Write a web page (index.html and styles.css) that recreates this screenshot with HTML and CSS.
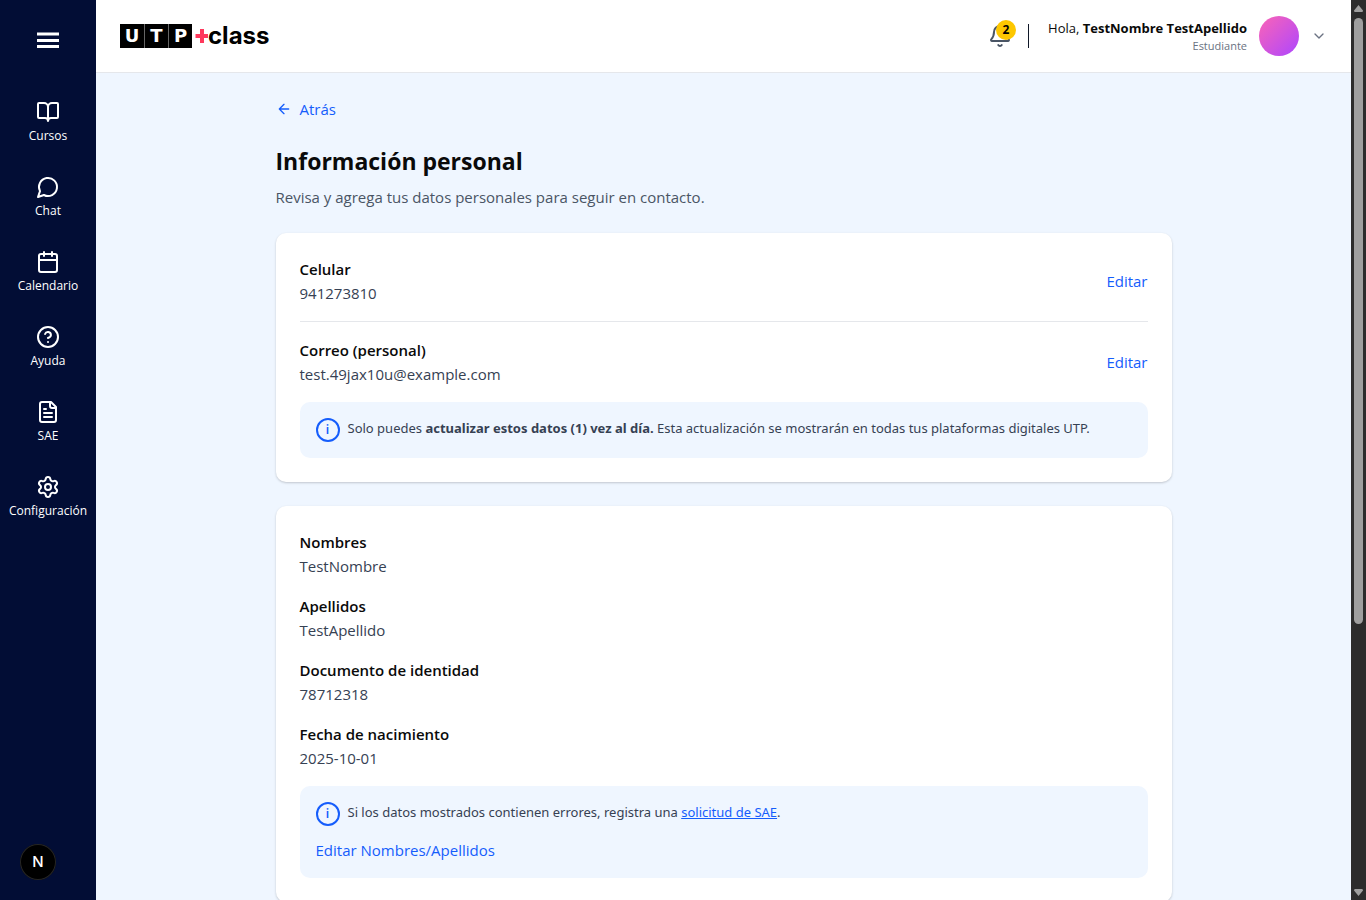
FILE: index.html
```html
<!DOCTYPE html>
<html lang="es">
<head>
<meta charset="utf-8">
<meta name="viewport" content="width=device-width, initial-scale=1">
<title>UTP+class - Información personal</title>
<link rel="stylesheet" href="styles.css">
</head>
<body class="app">
<aside class="sidebar">
  <button class="menu-button" type="button" aria-label="Menú">
    <svg class="icon" viewBox="0 0 24 24"><path class="menu-lines" d="M1 6h22M1 12.500h22M1 18.500h22"/></svg>
  </button>
  <nav class="nav">
    <a class="nav-item" href="#cursos">
      <svg class="icon" viewBox="0 0 24 24"><path d="M12 7v14M3 18a1 1 0 0 1-1-1V4a1 1 0 0 1 1-1h5a4 4 0 0 1 4 4 4 4 0 0 1 4-4h5a1 1 0 0 1 1 1v13a1 1 0 0 1-1 1h-6a3 3 0 0 0-3 3 3 3 0 0 0-3-3z"/></svg>
      <span>Cursos</span>
    </a>
    <a class="nav-item" href="#chat">
      <svg class="icon" viewBox="0 0 24 24"><path d="M7.900 20A9 9 0 1 0 4 16.100L2 22Z"/></svg>
      <span>Chat</span>
    </a>
    <a class="nav-item" href="#calendario">
      <svg class="icon" viewBox="0 0 24 24"><path d="M8 2v4M16 2v4M3 10h18"/><rect x="3" y="4" width="18" height="18" rx="2"/></svg>
      <span>Calendario</span>
    </a>
    <a class="nav-item" href="#ayuda">
      <svg class="icon" viewBox="0 0 24 24"><circle cx="12" cy="12" r="10"/><path d="M9.090 9a3 3 0 0 1 5.830 1c0 2-3 3-3 3M12 17h.01"/></svg>
      <span>Ayuda</span>
    </a>
    <a class="nav-item" href="#sae">
      <svg class="icon" viewBox="0 0 24 24"><path d="M15 2H6a2 2 0 0 0-2 2v16a2 2 0 0 0 2 2h12a2 2 0 0 0 2-2V7ZM14 2v4a2 2 0 0 0 2 2h4M10 9H8M16 13H8M16 17H8"/></svg>
      <span>SAE</span>
    </a>
    <a class="nav-item" href="#configuracion">
      <svg class="icon" viewBox="0 0 24 24"><path d="M9.671 4.136a2.340 2.340 0 0 1 4.659 0 2.340 2.340 0 0 0 3.319 1.915 2.340 2.340 0 0 1 2.330 4.033 2.340 2.340 0 0 0 0 3.831 2.340 2.340 0 0 1-2.330 4.033 2.340 2.340 0 0 0-3.319 1.915 2.340 2.340 0 0 1-4.659 0 2.340 2.340 0 0 0-3.320-1.915 2.340 2.340 0 0 1-2.330-4.033 2.340 2.340 0 0 0 0-3.831A2.340 2.340 0 0 1 6.350 6.051a2.340 2.340 0 0 0 3.319-1.915"/><circle cx="12" cy="12" r="3"/></svg>
      <span>Configuración</span>
    </a>
  </nav>
  <button class="dev-badge" type="button">N</button>
</aside>

<div class="page">
  <header class="topbar">
    <a class="logo" href="#inicio">
      <span class="logo-box">U</span><span class="logo-box">T</span><span class="logo-box">P</span>
      <svg class="logo-plus" viewBox="0 0 16 24"><path d="M10 5v14M3.500 12h12.500"/></svg>
      <span class="logo-word">class</span>
    </a>
    <div class="account">
      <button class="bell" type="button" aria-label="Notificaciones">
        <svg class="icon" viewBox="0 0 24 24"><path d="M10.268 21a2 2 0 0 0 3.464 0M3.262 15.326A1 1 0 0 0 4 17h16a1 1 0 0 0 .74-1.673C19.410 13.956 18 12.499 18 8A6 6 0 0 0 6 8c0 4.499-1.411 5.956-2.738 7.326"/></svg>
        <span class="bell-count">2</span>
      </button>
      <span class="divider"></span>
      <button class="profile" type="button">
        <span class="profile-text">
          <span class="profile-name">Hola, <strong>TestNombre TestApellido</strong></span>
          <span class="profile-role">Estudiante</span>
        </span>
        <span class="avatar"></span>
        <svg class="icon icon-small" viewBox="0 0 24 24"><path d="m6 9 6 6 6-6"/></svg>
      </button>
    </div>
  </header>

  <main class="content">
    <a class="back" href="#atras">
      <svg class="icon icon-small" viewBox="0 0 24 24"><path d="m12 19-7-7 7-7M19 12H5"/></svg>
      Atrás
    </a>
    <h1 class="title">Información personal</h1>
    <p class="subtitle">Revisa y agrega tus datos personales para seguir en contacto.</p>

    <section class="card">
      <div class="row row-lined">
        <dl class="field"><dt>Celular</dt><dd>941273810</dd></dl>
        <button class="link" type="button">Editar</button>
      </div>
      <div class="row">
        <dl class="field"><dt>Correo (personal)</dt><dd>test.49jax10u@example.com</dd></dl>
        <button class="link" type="button">Editar</button>
      </div>
      <div class="notice">
        <div class="notice-line">
          <span class="info">i</span>
          <p>Solo puedes <strong>actualizar estos datos (1) vez al día.</strong> Esta actualización se mostrarán en todas tus plataformas digitales UTP.</p>
        </div>
      </div>
    </section>

    <section class="card">
      <dl class="field"><dt>Nombres</dt><dd>TestNombre</dd></dl>
      <dl class="field"><dt>Apellidos</dt><dd>TestApellido</dd></dl>
      <dl class="field"><dt>Documento de identidad</dt><dd>78712318</dd></dl>
      <dl class="field"><dt>Fecha de nacimiento</dt><dd>2025-10-01</dd></dl>
      <div class="notice">
        <div class="notice-line">
          <span class="info">i</span>
          <p>Si los datos mostrados contienen errores, registra una <a class="inline-link" href="#solicitud">solicitud de SAE</a>.</p>
        </div>
        <button class="link" type="button">Editar Nombres/Apellidos</button>
      </div>
    </section>
  </main>
</div>

<div class="scrollbar" aria-hidden="true">
  <svg class="scroll-arrow" viewBox="0 0 9 7"><path d="M4.500 0 L9 5.500 Q9 7 8 7H1Q0 7 0 5.500Z"/></svg>
  <div class="scroll-track"><div class="scroll-thumb"></div></div>
  <svg class="scroll-arrow" viewBox="0 0 9 7"><path d="M4.500 7 L9 1.500 Q9 0 8 0H1Q0 0 0 1.500Z"/></svg>
</div>
</body>
</html>
```

FILE: styles.css
```css
* {
  box-sizing: border-box;
  margin: 0;
}

.app {
  display: grid;
  grid-template-columns: 96px minmax(0, 1fr) 15px;
  height: 100vh;
  overflow: hidden;
  background: #eff6ff;
  color: #0a0a0a;
  font-family: "Open Sans", "Noto Sans", sans-serif;
  font-size: 15px;
  line-height: 24px;
}

button {
  padding: 0;
  border: 0;
  background: none;
  color: inherit;
  font: inherit;
  cursor: pointer;
}

a {
  color: inherit;
  text-decoration: none;
}

.icon {
  display: block;
  flex: none;
  width: 24px;
  height: 24px;
  fill: none;
  stroke: currentColor;
  stroke-width: 2;
  stroke-linecap: round;
  stroke-linejoin: round;
}

.icon-small {
  width: 16px;
  height: 16px;
}

/* Sidebar */
.sidebar {
  display: flex;
  flex-direction: column;
  align-items: center;
  gap: 48px;
  padding-top: 28px;
  background: #020d35;
  color: #fff;
}

.menu-lines {
  stroke-width: 3;
  stroke-linecap: butt;
}

.nav {
  display: flex;
  flex-direction: column;
  gap: 32px;
}

.nav-item {
  display: flex;
  flex-direction: column;
  align-items: center;
  gap: 4px;
  font-size: 12px;
  line-height: 15px;
}

.dev-badge {
  position: fixed;
  left: 20px;
  bottom: 20px;
  width: 36px;
  height: 36px;
  border-radius: 50%;
  background: #000;
  box-shadow: inset 0 0 0 1px #262626;
  color: #fff;
  font-family: Inter, sans-serif;
  font-size: 15px;
  font-weight: 500;
}

/* Header */
.page {
  overflow: hidden;
}

.topbar {
  display: flex;
  align-items: center;
  justify-content: space-between;
  height: 73px;
  padding: 0 24px;
  border-bottom: 1px solid #e5e7eb;
  background: #fff;
}

.logo {
  display: flex;
  align-items: center;
  color: #000;
}

.logo-box {
  width: 24px;
  height: 24px;
  background: #000;
  color: #fff;
  font-family: "DejaVu Sans", sans-serif;
  font-size: 18px;
  font-weight: 700;
  line-height: 24px;
  text-align: center;
}

.logo-box + .logo-box {
  border-left: 1px solid #666;
}

.logo-word {
  font-family: Inter, sans-serif;
  font-size: 24px;
  font-weight: 700;
}

.logo-plus {
  width: 16px;
  height: 24px;
  fill: none;
  stroke: #ff385c;
  stroke-width: 4;
}

.account,
.profile {
  display: flex;
  align-items: center;
}

.account {
  gap: 16px;
}

.profile {
  gap: 12px;
  color: #0a0a0a;
}

.profile .icon {
  color: #6a7282;
}

.bell {
  position: relative;
  color: #4a5565;
}

.bell-count {
  position: absolute;
  top: -4px;
  right: -4px;
  width: 20px;
  height: 20px;
  border-radius: 50%;
  background: #fdc700;
  color: #000;
  font-size: 12px;
  font-weight: 700;
  line-height: 20px;
}

.divider {
  width: 1px;
  height: 24px;
  background: #101828;
}

.profile-text {
  display: flex;
  flex-direction: column;
  min-width: 202px;
  text-align: right;
}

.profile-name {
  font-size: 13px;
  line-height: 20px;
}

.profile-role {
  color: #6a7282;
  font-size: 11px;
  line-height: 16px;
}

.avatar {
  width: 40px;
  height: 40px;
  border-radius: 50%;
  background: linear-gradient(135deg, #fb64b6, #ad46ff);
}

/* Content */
.content {
  max-width: 944px;
  margin: 0 auto;
  padding: 24px;
}

.back {
  display: flex;
  align-items: center;
  gap: 8px;
  width: fit-content;
  margin-bottom: 24px;
  color: #155dfc;
}

.title {
  margin-bottom: 8px;
  font-size: 23px;
  font-weight: 700;
  line-height: 32px;
}

.subtitle {
  margin-bottom: 24px;
  color: #4a5565;
}

.card {
  display: flex;
  flex-direction: column;
  gap: 16px;
  margin-bottom: 24px;
  padding: 24px;
  border-radius: 10px;
  background: #fff;
  box-shadow: 0 1px 3px rgba(0, 0, 0, 0.1), 0 1px 2px rgba(0, 0, 0, 0.1);
}

.row {
  display: flex;
  align-items: center;
  justify-content: space-between;
}

.row-lined {
  padding-bottom: 16px;
  border-bottom: 1px solid #e5e7eb;
}

.field dt {
  font-weight: 600;
}

.field dd {
  color: #364153;
}

.link {
  color: #155dfc;
}

.notice {
  display: flex;
  flex-direction: column;
  align-items: flex-start;
  gap: 12px;
  padding: 16px;
  border-radius: 10px;
  background: #eff6ff;
}

.notice-line {
  display: flex;
  align-items: flex-start;
  gap: 8px;
  color: #364153;
  font-family: "Noto Sans", sans-serif;
  font-size: 13px;
  line-height: 20px;
}

.info {
  flex: none;
  width: 24px;
  height: 24px;
  border: 2px solid #155dfc;
  border-radius: 50%;
  color: #155dfc;
  font-size: 12px;
  font-weight: 600;
  text-align: center;
}

.inline-link {
  color: #155dfc;
  text-decoration: underline;
}

/* Scrollbar */
.scrollbar {
  display: flex;
  flex-direction: column;
  align-items: center;
  gap: 6px;
  padding: 5px 0 4px;
  background: #2c2c2c;
}

.scroll-arrow {
  flex: none;
  width: 9px;
  height: 7px;
  fill: #9f9f9f;
}

.scroll-track {
  flex: 1;
  width: 9px;
}

.scroll-thumb {
  height: 70%;
  border-radius: 5px;
  background: #9f9f9f;
}
```
